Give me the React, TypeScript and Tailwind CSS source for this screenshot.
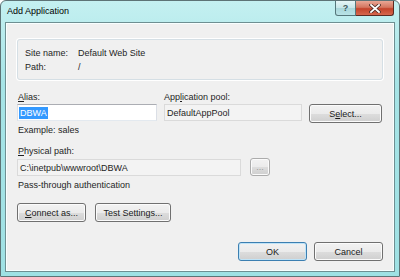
const font = { fontFamily: '"Liberation Sans", Arial, sans-serif' };

function Btn({ children, className = '', primary = false }: { children: React.ReactNode; className?: string; primary?: boolean }) {
  return (
    <div
      className={
        'flex items-center justify-center rounded-[3px] border text-[9px] text-[#1a1a1a] bg-[linear-gradient(to_bottom,#f2f2f2_0%,#ebebeb_50%,#dddddd_51%,#cfcfcf_100%)] ' +
        (primary
          ? 'border-[#3c7fb1] shadow-[inset_0_0_0_1px_#bfe3f7] '
          : 'border-[#707070] shadow-[inset_0_0_0_1px_#fbfbfb] ') +
        className
      }
    >
      {children}
    </div>
  );
}

export default function App() {
  return (
    <div className="w-[400px] h-[277px] overflow-hidden bg-white" style={font}>
      <div className="w-[400px] h-[277px] flex flex-col rounded-t-[6px] border border-[#5d7376] bg-[linear-gradient(to_bottom,#c4f0f1_0%,#a6e4e6_30%,#9fe1e4_100%)] pl-[4px] pr-[4px] pb-[4px]">
        {/* title bar */}
        <div className="h-[21px] flex items-start justify-between">
          <span className="pl-[2px] pt-[5px] text-[9px] leading-[11px] text-black">Add Application</span>
          <div className="flex pr-[1px]">
            <div className="w-[21px] h-[15px] flex items-center justify-center rounded-bl-[3px] border border-t-0 border-[#55777b] bg-[linear-gradient(to_bottom,#e6f6f7_0%,#c6e6e8_50%,#a9d6da_51%,#b8e3e6_100%)] text-[9px] font-bold leading-none text-[#40595c]">
              ?
            </div>
            <div className="w-[38px] h-[15px] flex items-center justify-center rounded-br-[3px] border border-l-0 border-t-0 border-[#5b2a22] bg-[linear-gradient(to_bottom,#e9a795_0%,#d47660_45%,#c4432b_55%,#d5674d_100%)]">
              <svg width="12" height="9" viewBox="0 0 12 9">
                <path d="M2 1 L10 8 M10 1 L2 8" stroke="#4a2a24" strokeWidth="3.4" strokeLinecap="square" />
                <path d="M2 1 L10 8 M10 1 L2 8" stroke="#ffffff" strokeWidth="1.8" strokeLinecap="square" />
              </svg>
            </div>
          </div>
        </div>

        {/* client area */}
        <div className="flex-1 border border-[#6e8f92] bg-[#f0f0f0] shadow-[inset_0_0_0_1px_#f8ffff] px-[11px] pt-[16px] text-[9px] leading-[14px] text-[#1e1e1e]">
          <div className="h-[41px] rounded-[3px] border border-[#d5dfe5] shadow-[0_0_0_1px_#ffffff] pl-[7px] pt-[6px]">
            <div className="flex">
              <span className="w-[53px]">Site name:</span>
              <span>Default Web Site</span>
            </div>
            <div className="flex">
              <span className="w-[53px]">Path:</span>
              <span>/</span>
            </div>
          </div>

          <div className="mt-[10px] flex gap-[7px]">
            <div className="w-[140px]">
              <div className="h-[14px] pl-[1px]">
                <span className="underline">A</span>lias:
              </div>
              <div className="h-[17px] border border-[#abadb3] border-b-[#e3e9ef] border-x-[#dbdfe6] bg-white flex items-center pl-[1px]">
                <span className="bg-[#3399ff] text-white px-[1px] leading-[12px]">DBWA</span>
              </div>
              <div className="mt-[2px] pl-[1px]">Example: sales</div>
            </div>
            <div className="w-[138px]">
              <div className="h-[14px]">
                App<span className="underline">l</span>ication pool:
              </div>
              <div className="h-[17px] border border-[#dadada] bg-[#f3f3f3] flex items-center pl-[2px]">DefaultAppPool</div>
            </div>
            <div className="w-[73px] pt-[14px]">
              <Btn className="h-[19px]">
                S<span className="underline">e</span>lect...
              </Btn>
            </div>
          </div>

          <div className="mt-[7px] h-[14px] pl-[1px]">
            <span className="underline">P</span>hysical path:
          </div>
          <div className="flex items-start gap-[9px]">
            <div className="w-[224px] h-[17px] mt-[1px] border border-[#dadada] bg-[#f3f3f3] flex items-center pl-[2px]">
              C:\inetpub\wwwroot\DBWA
            </div>
            <Btn className="w-[20px] h-[18px] !border-[#acacac] text-[#9a9a9a]">...</Btn>
          </div>
          <div className="mt-[2px] pl-[1px]">Pass-through authentication</div>

          <div className="mt-[11px] flex gap-[9px]">
            <Btn className="w-[69px] h-[19px]">
              <span className="underline">C</span>onnect as...
            </Btn>
            <Btn className="w-[76px] h-[19px]">Test Settings...</Btn>
          </div>

          <div className="mt-[20px] flex justify-end gap-[7px] pr-[0px]">
            <Btn primary className="w-[69px] h-[19px]">OK</Btn>
            <Btn className="w-[69px] h-[19px]">Cancel</Btn>
          </div>
        </div>
      </div>
    </div>
  );
}
